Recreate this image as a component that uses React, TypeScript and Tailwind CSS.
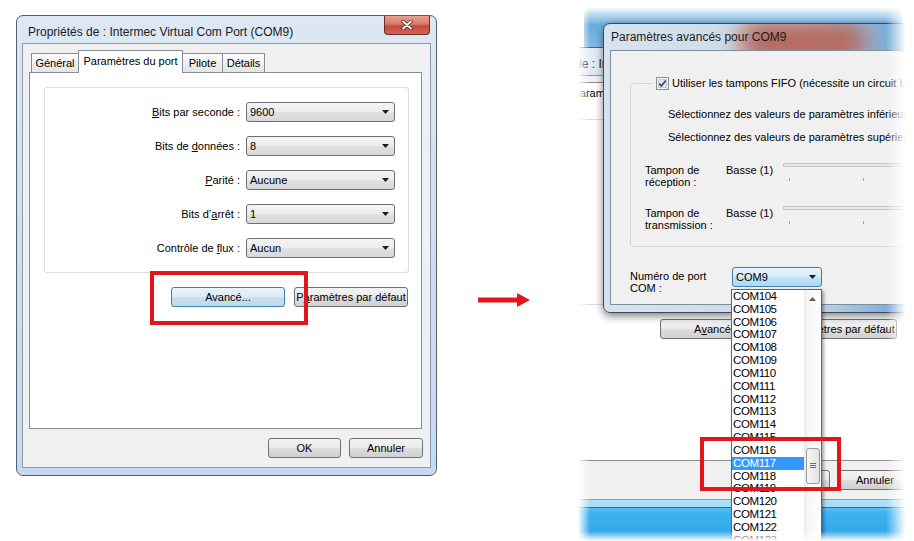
import React from 'react'

const arrowDown = (
  <svg width="7" height="4" viewBox="0 0 7 4"><path d="M0 0h7L3.5 4z" fill="#1c1c1c" /></svg>
)

function Combo({ value, focused = false, w = 'w-[149px]' }: { value: string; focused?: boolean; w?: string }) {
  const skin = focused
    ? 'border-[#3c7fb1] bg-[linear-gradient(180deg,#e8f4fc_0%,#d6ecf9_48%,#c2e2f6_52%,#b0d8f1_100%)]'
    : 'border-[#707070] bg-[linear-gradient(180deg,#f4f4f4_0%,#ececec_48%,#e1e1e1_52%,#d8d8d8_100%)]'
  return (
    <div className={`${w} h-[20px] shrink-0 flex items-center justify-between rounded-[3px] border pl-[3px] pr-[5px] ${skin}`}>
      <span>{value}</span>
      {arrowDown}
    </div>
  )
}

function Btn({ children, w, focused = false }: { children: React.ReactNode; w: string; focused?: boolean }) {
  const skin = focused
    ? 'border-[#3c7fb1] bg-[linear-gradient(180deg,#eaf4fb_0%,#dcebf7_48%,#cbe0f1_52%,#bfd8ec_100%)]'
    : 'border-[#707070] bg-[linear-gradient(180deg,#f3f3f3_0%,#ebebeb_48%,#dddddd_52%,#d0d0d0_100%)]'
  return (
    <div className={`${w} h-[20px] flex items-center justify-center rounded-[3px] border ${skin}`}>{children}</div>
  )
}

function CloseBtn() {
  return (
    <div className="mr-[1px] w-[46px] h-[19px] flex items-center justify-center rounded-b-[4px] border border-t-0 border-[#6d2c25] bg-[linear-gradient(180deg,#e6a193_0%,#d8796a_45%,#c44b3b_55%,#cd6652_100%)]">
      <svg width="12" height="10" viewBox="0 0 12 10">
        <path d="M2 1.5L10 8.5M10 1.5L2 8.5" stroke="#5a1a14" strokeWidth="3.4" strokeLinecap="round" />
        <path d="M2 1.5L10 8.5M10 1.5L2 8.5" stroke="#fff" strokeWidth="1.9" strokeLinecap="round" />
      </svg>
    </div>
  )
}

function Tab({ label, active = false, w }: { label: string; active?: boolean; w: string }) {
  if (active)
    return (
      <div className={`${w} relative z-10 -ml-px -mb-px h-[23px] pt-[3px] border border-b-0 border-[#898c95] bg-white text-center leading-[14px]`}>
        {label}
      </div>
    )
  return (
    <div className={`${w} -ml-px first:ml-0 h-[19px] pt-[2px] border border-b-0 border-[#898c95] bg-[linear-gradient(180deg,#fcfcfc,#e4e4e4)] text-center leading-[14px]`}>
      {label}
    </div>
  )
}

function PropsDialog({ back = false }: { back?: boolean }) {
  const rows = [
    { label: <><u>B</u>its par seconde :</>, value: '9600' },
    { label: <>Bits de <u>d</u>onnées :</>, value: '8' },
    { label: <><u>P</u>arité :</>, value: 'Aucune' },
    { label: <>Bits d’<u>a</u>rrêt :</>, value: '1' },
    { label: <>Contrôle de <u>f</u>lux :</>, value: 'Aucun' },
  ]
  const frame = back
    ? 'bg-[linear-gradient(180deg,#e3ecf5_0%,#dde8f3_10%,#d2e4f2_92%,#a6def7_100%)]'
    : 'bg-[linear-gradient(180deg,#dde8f4_0%,#d2e0ef_40%,#c7daed_100%)]'
  return (
    <div className={`relative isolate w-[421px] h-[461px] shrink-0 flex flex-col rounded-[7px] border border-[#52606e] px-[5px] pb-[7px] ${frame}`}>
      <div className="h-[27px] shrink-0 flex justify-between">
        <span className="pl-[6px] pt-[9px] text-[12px] leading-[14px] text-[#1b1b1b]">Propriétés de : Intermec Virtual Com Port (COM9)</span>
        <CloseBtn />
      </div>
      <div className="flex-1 flex flex-col border border-[#8a9bb0] bg-[#f0f0f0] pt-[6px]">
        <div className="h-[22px] shrink-0 flex items-end pl-[8px]">
          <Tab label="Général" w="w-[48px]" />
          <Tab label="Paramètres du port" w="w-[105px]" active />
          <Tab label="Pilote" w="w-[41px]" />
          <Tab label="Détails" w="w-[43px]" />
        </div>
        <div className="flex-1 ml-[6px] mr-[8px] border border-[#898c95] bg-white pl-[14px] pr-[12px] pt-[14px]">
          <div className="h-[186px] flex flex-col gap-[14px] rounded-[3px] border border-[#d8dde2] pt-[14px] pr-[13px]">
            {rows.map((r, i) => (
              <div key={i} className="h-[20px] flex items-center justify-end gap-[6px]">
                <span>{r.label}</span>
                <Combo value={r.value} />
              </div>
            ))}
          </div>
          <div className="mt-[14px] flex justify-end gap-[9px] pr-[1px]">
            <Btn w="w-[114px]" focused={!back}>{back ? <>A<u>v</u>ancé...</> : 'Avancé...'}</Btn>
            <Btn w="w-[114px]">P<u>a</u>ramètres par défaut</Btn>
          </div>
        </div>
        <div className="h-[38px] shrink-0 flex justify-end gap-[8px] pr-[7px] pt-[9px]">
          <Btn w="w-[73px]">OK</Btn>
          <Btn w="w-[74px]">Annuler</Btn>
        </div>
      </div>
      {!back && <div className="absolute left-[133px] top-[255px] w-[158px] h-[54px] border-[4px] border-[#e0161b]" />}
    </div>
  )
}

function BufRow({ second, mt }: { second: string; mt: string }) {
  return (
    <div className={`${mt} ml-[14px] flex items-start`}>
      <div className="w-[81px] shrink-0 leading-[12px]">Tampon de<br />{second}</div>
      <div className="w-[57px] shrink-0 leading-[12px]">Basse (1)</div>
      <div className="flex-1">
        <div className="h-[4px] -mt-[1px] rounded-l-[2px] border border-r-0 border-[#c4c4c4] bg-[#e8e8e8]" />
        <div className="mt-[11px] ml-[6px] flex gap-[73px]">
          <div className="w-px h-[3px] bg-[#a8a8a8]" />
          <div className="w-px h-[3px] bg-[#a8a8a8]" />
        </div>
      </div>
    </div>
  )
}

function AdvancedDialog() {
  return (
    <div className="absolute left-[25px] top-[23px] w-[340px] h-[290px] flex flex-col overflow-hidden rounded-[7px] border border-[#3b4857] px-[6px] pb-[7px] shadow-[0_3px_9px_rgba(0,0,0,0.5)] bg-[linear-gradient(90deg,#d6e3ef_0%,#cad9e7_60%,#6ea9d9_88%,#3087cf_100%)]">
      <div className="relative h-[26px] shrink-0 pl-[1px] pt-[6px] text-[12px] leading-[14px] text-[#1b1b1b]">
        <div className="absolute left-[128px] top-[-4px] w-[130px] h-[44px] rounded-full bg-[#b4665b] blur-[12px]" />
        <span className="relative">Paramètres avancés pour COM9</span>
      </div>
      <div className="relative flex-1 border border-[#7f8d9b] bg-[#f0f0f0] pl-[19px]">
        <fieldset className="mt-[26px] w-[320px] rounded-[3px] border border-[#d0d7dc] pb-[15px]">
          <legend className="ml-[22px] px-[3px]">
            <span className="flex items-center gap-[3px] whitespace-nowrap leading-[13px]">
              <svg width="13" height="13" viewBox="0 0 13 13">
                <rect x="0.5" y="0.5" width="12" height="12" fill="#f4f4f4" stroke="#8e8f8f" />
                <rect x="2.5" y="2.5" width="8" height="8" fill="#e2e6ea" stroke="#c7ccd2" />
                <path d="M3.2 6.6L5.4 9L9.8 3.6" stroke="#2e4e7a" strokeWidth="1.7" fill="none" />
              </svg>
              Utiliser les tampons FIFO (nécessite un circuit UART compatible 16550)
            </span>
          </legend>
          <div className="ml-[37px] mt-[18px] leading-[13px] whitespace-nowrap">Sélectionnez des valeurs de paramètres inférieures pour résoudre les problèmes.</div>
          <div className="ml-[37px] mt-[10px] leading-[13px] whitespace-nowrap">Sélectionnez des valeurs de paramètres supérieures pour de meilleures performances.</div>
          <BufRow second="réception :" mt="mt-[20px]" />
          <BufRow second="transmission :" mt="mt-[19px]" />
        </fieldset>
        <div className="mt-[20px] flex items-start">
          <div className="w-[102px] shrink-0 pt-[3px] leading-[12px]">Numéro de port<br />COM :</div>
          <Combo value="COM9" focused w="w-[90px]" />
        </div>
      </div>
    </div>
  )
}

function PortList() {
  const ports = Array.from({ length: 20 }, (_, i) => `COM${104 + i}`)
  return (
    <div className="absolute left-[153px] top-[289px] w-[91px] h-[270px] flex border border-[#646464] bg-white shadow-[2px_2px_3px_rgba(0,0,0,0.35)] text-[11.5px] tracking-[-0.4px]">
      <div className="flex-1 flex flex-col">
        {ports.map(p => (
          <div key={p} className={`h-[12.83px] shrink-0 leading-[12.83px] pl-[1px] ${p === 'COM117' ? 'bg-[#3399ff] text-white' : 'text-black'}`}>{p}</div>
        ))}
      </div>
      <div className="w-[17px] flex flex-col items-center bg-[linear-gradient(90deg,#ebebeb,#f8f8f8_30%,#fdfdfd)]">
        <div className="h-[17px] flex items-center justify-center">
          <svg width="7" height="4" viewBox="0 0 7 4"><path d="M0 4h7L3.5 0z" fill="#5e5e5e" /></svg>
        </div>
        <div className="mt-[141px] w-[14px] h-[36px] flex items-center justify-center rounded-[3px] border border-[#9a9a9a] bg-[linear-gradient(90deg,#f6f6f6,#e2e2e2)]">
          <svg width="6" height="6" viewBox="0 0 6 6"><path d="M0 0.5h6M0 2.5h6M0 4.5h6" stroke="#6a6a6a" strokeWidth="1" /></svg>
        </div>
      </div>
    </div>
  )
}

export default function App() {
  return (
    <div className="w-[914px] h-[541px] overflow-hidden bg-white flex items-start font-['Liberation_Sans',Arial,sans-serif] text-[11px] text-black">
      <div className="ml-[16px] mt-[15px]">
        <PropsDialog />
      </div>

      <svg className="ml-[41px] mt-[293px] shrink-0" width="52" height="14" viewBox="0 0 52 14">
        <rect x="0" y="4.5" width="40" height="5" fill="#e3161c" />
        <path d="M39 0L52 7L39 14z" fill="#e3161c" />
      </svg>

      <div className="relative isolate ml-[48px] w-[336px] h-[541px] shrink-0 overflow-hidden">
        <div className="absolute left-[6px] top-[6px] w-[318px] h-[48px] rounded-t-[10px] bg-[linear-gradient(180deg,rgba(90,160,215,0)_0%,#6aaede_40%,#8dbde3_100%)]" />
        <div className="absolute left-0 top-[497px] w-full h-[44px] bg-[linear-gradient(180deg,#a5e0f7_0%,#7fd0f4_15%,#3db4ef_35%,#2ca3e6_100%)]" />
        <div className="absolute isolate left-[-73px] top-[47px]">
          <PropsDialog back />
        </div>
        <AdvancedDialog />
        <PortList />

        <div className="absolute left-0 top-0 w-full h-[12px] bg-linear-to-b from-white to-transparent" />
        <div className="absolute left-0 bottom-0 w-full h-[10px] bg-linear-to-t from-white to-transparent" />
        <div className="absolute left-0 top-0 h-full w-[12px] bg-linear-to-r from-white to-transparent" />
        <div className="absolute right-0 top-0 h-full w-[28px] bg-[linear-gradient(to_left,#fff_30%,rgba(255,255,255,0))]" />

        <div className="absolute left-[122px] top-[437px] w-[141px] h-[54px] border-[4px] border-[#e0161b]" />
      </div>
    </div>
  )
}
